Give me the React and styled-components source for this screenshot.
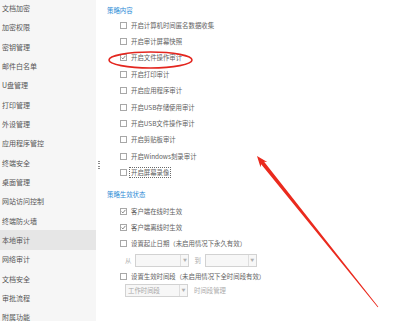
import React from "react";
import styled, { createGlobalStyle } from "styled-components";

const Global = createGlobalStyle`
  html, body { margin: 0; padding: 0; background: #fff; overflow: hidden; }
  body { font-family: "Noto Sans CJK SC", "Noto Sans", sans-serif; }
  * { box-sizing: border-box; }
`;

const Page = styled.div`
  position: relative;
  width: 416px;
  height: 323px;
  display: flex;
  overflow: hidden;
  background: #fff;
`;

const Sidebar = styled.div`
  width: 96px;
  height: 100%;
  background: #f6f6f6;
  display: flex;
  flex-direction: column;
  margin-top: -1.7px;
`;

const NavItem = styled.div`
  height: 19.33px;
  flex: none;
  display: flex;
  align-items: center;
  padding-left: 2px;
  font-size: 7px;
  color: #555;
  white-space: nowrap;
  background: ${(p) => (p.$active ? "#e6e6e6" : "transparent")};
`;

const Splitter = styled.div`
  width: 6px;
  height: 100%;
  display: flex;
  flex-direction: column;
  align-items: center;
  justify-content: center;
  gap: 1.3px;
  padding-top: 7px;
`;

const Dot = styled.span`
  width: 1.2px;
  height: 1.2px;
  background: #8a8a8a;
`;

const Content = styled.div`
  flex: 1;
  display: flex;
  flex-direction: column;
  padding: 3px 0 0 5px;
`;

const SectionTitle = styled.div`
  height: ${(p) => p.$h || 14}px;
  margin-top: ${(p) => p.$mt || 0}px;
  display: flex;
  align-items: center;
  font-size: 6.4px;
  color: #2d8bd6;
  white-space: nowrap;
`;

const Row = styled.div`
  height: 16.4px;
  flex: none;
  display: flex;
  align-items: center;
  padding-left: 13px;
  font-size: 6.4px;
  color: #616161;
  white-space: nowrap;
`;

const Box = styled.span`
  width: 7px;
  height: 7px;
  border: 1px solid #a8a8a8;
  background: #fff;
  margin-right: 2px;
  flex: none;
  display: flex;
  align-items: center;
  justify-content: center;
`;

const Label = styled.span`
  padding: 0 1px;
  line-height: 9px;
  border: 1px dotted ${(p) => (p.$focus ? "#6a6a6a" : "transparent")};
`;

const FieldRow = styled.div`
  height: ${(p) => p.$h}px;
  flex: none;
  display: flex;
  align-items: center;
  padding-left: 18px;
  font-size: 6.4px;
  color: #ababab;
  white-space: nowrap;
`;

const Field = styled.div`
  width: ${(p) => p.$w}px;
  height: 13px;
  margin-left: ${(p) => p.$ml || 0}px;
  margin-right: ${(p) => p.$mr || 0}px;
  border: 1px solid #d2d2d2;
  background: #f7f7f7;
  display: flex;
  align-items: stretch;
  flex: none;
`;

const FieldText = styled.span`
  flex: 1;
  display: flex;
  align-items: center;
  padding-left: 2px;
  color: #a8a8a8;
`;

const FieldArrow = styled.span`
  width: 8px;
  border-left: 1px solid #dedede;
  display: flex;
  align-items: center;
  justify-content: center;
  font-size: 4px;
  color: #b0b0b0;
`;

const Gap = styled.span`
  margin-left: ${(p) => p.$w}px;
`;

const Overlay = styled.svg`
  position: absolute;
  left: 0;
  top: 0;
  width: 416px;
  height: 323px;
  pointer-events: none;
`;

const navItems = [
  "文档加密", "加密权限", "密钥管理", "邮件白名单", "U盘管理", "打印管理",
  "外设管理", "应用程序管控", "终端安全", "桌面管理", "网站访问控制",
  "终端防火墙", "本地审计", "网络审计", "文档安全", "审批流程", "附属功能",
];

const policy = [
  { t: "开启计算机时间匿名数据收集" },
  { t: "开启审计屏幕快照" },
  { t: "开启文件操作审计", c: true },
  { t: "开启打印审计" },
  { t: "开启应用程序审计" },
  { t: "开启USB存储使用审计" },
  { t: "开启USB文件操作审计" },
  { t: "开启剪贴板审计" },
  { t: "开启Windows刻录审计" },
  { t: "开启屏幕录像", f: true },
];

const Check = ({ checked }) => (
  <Box>
    {checked && (
      <svg width="5" height="5" viewBox="0 0 5 5">
        <path d="M0.6 2.6 L1.9 3.9 L4.4 0.9" fill="none" stroke="#666" strokeWidth="0.8" />
      </svg>
    )}
  </Box>
);

const CheckRow = ({ checked, focus, children }) => (
  <Row>
    <Check checked={checked} />
    <Label $focus={focus}>{children}</Label>
  </Row>
);

export default function App() {
  const tip = [257, 156];
  const tail = [378, 307];
  const dx = tail[0] - tip[0];
  const dy = tail[1] - tip[1];
  const len = Math.hypot(dx, dy);
  const u = [dx / len, dy / len];
  const n = [-u[1], u[0]];
  const pt = (base, along, side) => [
    base[0] + u[0] * along + n[0] * side,
    base[1] + u[1] * along + n[1] * side,
  ];
  const pts = [
    tip,
    pt(tip, 11, 4.3),
    pt(tip, 9, 1.9),
    pt(tail, 0, 0.4),
    pt(tail, 0, -0.4),
    pt(tip, 9, -1.9),
    pt(tip, 11, -4.3),
  ]
    .map((p) => p.map((v) => v.toFixed(2)).join(","))
    .join(" ");

  return (
    <Page>
      <Global />
      <Sidebar>
        {navItems.map((n) => (
          <NavItem key={n} $active={n === "本地审计"}>{n}</NavItem>
        ))}
      </Sidebar>
      <Splitter>
        <Dot /><Dot /><Dot /><Dot />
      </Splitter>
      <Content>
        <SectionTitle $h={14}>策略内容</SectionTitle>
        {policy.map((p) => (
          <CheckRow key={p.t} checked={p.c} focus={p.f}>{p.t}</CheckRow>
        ))}
        <SectionTitle $h={16} $mt={6}>策略生效状态</SectionTitle>
        <CheckRow checked>客户端在线时生效</CheckRow>
        <CheckRow checked>客户端离线时生效</CheckRow>
        <CheckRow>设置起止日期（未启用情况下永久有效）</CheckRow>
        <FieldRow $h={16}>
          从
          <Field $w={54} $ml={4}>
            <FieldText />
            <FieldArrow>▼</FieldArrow>
          </Field>
          <Gap $w={5}>到</Gap>
          <Field $w={52} $ml={4}>
            <FieldText />
            <FieldArrow>▼</FieldArrow>
          </Field>
        </FieldRow>
        <CheckRow>设置生效时间段（未启用情况下全时间段有效）</CheckRow>
        <FieldRow $h={12}>
          <Field $w={63} $mr={6}>
            <FieldText>工作时间段</FieldText>
            <FieldArrow>▼</FieldArrow>
          </Field>
          时间段管理
        </FieldRow>
      </Content>
      <Overlay viewBox="0 0 416 323">
        <ellipse cx="150.5" cy="60" rx="41.5" ry="8" fill="none" stroke="#e3261f" strokeWidth="1.6" />
        <polygon points={pts} fill="#ea2a1e" />
      </Overlay>
    </Page>
  );
}
